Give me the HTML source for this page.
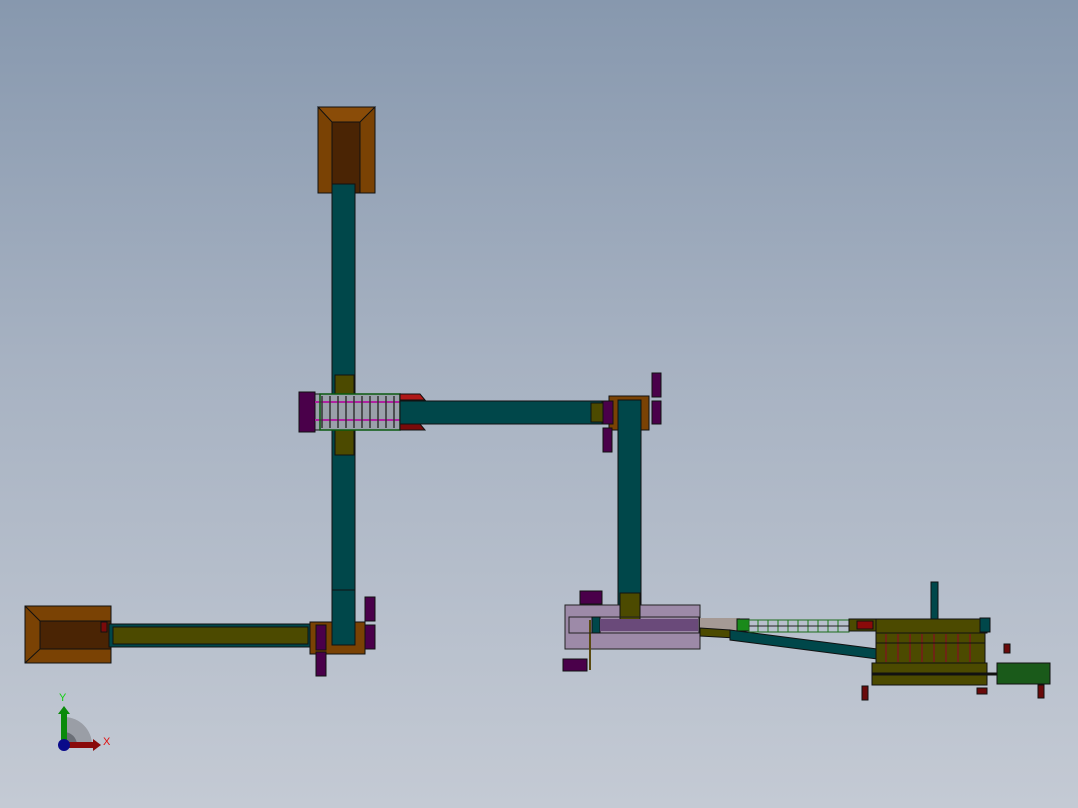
<!DOCTYPE html>
<html><head><meta charset="utf-8"><style>
html,body{margin:0;padding:0;width:1078px;height:808px;overflow:hidden}
body{background:linear-gradient(#8798ae 0%,#a7b2c2 45%,#c4cad4 100%)}
svg{position:absolute;left:0;top:0}
text{font-family:"Liberation Sans",sans-serif}
</style></head><body>
<svg width="1078" height="808" viewBox="0 0 1078 808" stroke="#111" stroke-width="1">
<!-- top hopper -->
<rect x="318" y="107" width="57" height="86" fill="#7a4204"/>
<polygon points="318,107 375,107 360,122 332,122" fill="#8a4c08"/>
<rect x="332" y="122" width="28" height="71" fill="#4a2404"/>
<!-- main vertical teal -->
<rect x="332" y="184" width="23" height="462" fill="#00474a"/>
<rect x="335" y="375" width="19" height="80" fill="#4c4a00"/>
<!-- center unit -->
<rect x="299" y="392" width="16" height="40" fill="#4a004a"/>
<rect x="315" y="394" width="85" height="36" fill="#9aa0aa"/>
<line x1="315" y1="402" x2="400" y2="402" stroke="#b020a0" stroke-width="2"/>
<line x1="315" y1="420" x2="400" y2="420" stroke="#b020a0" stroke-width="2"/>
<g stroke="#333" stroke-width="1.5">
<line x1="322" y1="396" x2="322" y2="428"/><line x1="330" y1="396" x2="330" y2="428"/><line x1="338" y1="396" x2="338" y2="428"/><line x1="346" y1="396" x2="346" y2="428"/><line x1="354" y1="396" x2="354" y2="428"/><line x1="362" y1="396" x2="362" y2="428"/><line x1="370" y1="396" x2="370" y2="428"/><line x1="378" y1="396" x2="378" y2="428"/><line x1="386" y1="396" x2="386" y2="428"/><line x1="394" y1="396" x2="394" y2="428"/>
</g>
<rect x="320" y="394" width="80" height="36" fill="none" stroke="#0a5a10" stroke-width="1.5"/>
<polygon points="400,394 420,394 425,400 400,400" fill="#b01818"/>
<polygon points="400,424 420,424 425,430 400,430" fill="#7a0a0a"/>
<!-- horizontal teal -->
<rect x="400" y="401" width="202" height="23" fill="#00474a"/>
<rect x="591" y="403" width="12" height="19" fill="#4c4a00"/>
<rect x="609" y="396" width="40" height="34" fill="#7a4204"/>
<rect x="603" y="401" width="10" height="23" fill="#4a004a"/>
<rect x="652" y="373" width="9" height="24" fill="#4a004a"/>
<rect x="652" y="401" width="9" height="23" fill="#4a004a"/>
<rect x="603" y="428" width="9" height="24" fill="#4a004a"/>
<!-- right vertical teal -->
<rect x="618" y="400" width="23" height="222" fill="#00474a"/>
<!-- bottom left hopper -->
<rect x="25" y="606" width="86" height="57" fill="#7a4204"/>
<rect x="40" y="621" width="71" height="28" fill="#4a2404"/>
<line x1="25" y1="606" x2="40" y2="621"/><line x1="25" y1="663" x2="40" y2="649"/>
<rect x="101" y="622" width="6" height="10" fill="#7a0a0a"/>
<!-- bottom conveyor -->
<rect x="109" y="624" width="205" height="23" fill="#00474a"/>
<rect x="113" y="627" width="195" height="17" fill="#4c4a00"/>
<rect x="310" y="622" width="55" height="32" fill="#7a4204"/>
<rect x="316" y="625" width="10" height="25" fill="#4a004a"/>
<rect x="365" y="597" width="10" height="24" fill="#4a004a"/>
<rect x="365" y="625" width="10" height="24" fill="#4a004a"/>
<rect x="316" y="652" width="10" height="24" fill="#4a004a"/>
<rect x="332" y="590" width="23" height="55" fill="#00474a"/>
<!-- lower right assembly -->
<rect x="565" y="605" width="135" height="44" fill="#9d8aa8" stroke="#222"/>
<rect x="580" y="591" width="22" height="13" fill="#4a004a"/>
<rect x="563" y="659" width="24" height="12" fill="#4a004a"/>
<line x1="590" y1="620" x2="590" y2="670" stroke="#5a4a10" stroke-width="2"/>
<rect x="620" y="593" width="20" height="28" fill="#4c4a00"/>
<rect x="569" y="617" width="130" height="16" fill="none" stroke="#222"/>
<rect x="592" y="617" width="8" height="16" fill="#00474a"/>
<rect x="600" y="619" width="98" height="12" fill="#6a4a7a" stroke="none"/>
<rect x="700" y="618" width="40" height="12" fill="#a59a95" stroke="none"/>
<polygon points="700,628 730,630 735,638 700,636" fill="#4c4a00"/>
<polygon points="730,630 893,651 893,661 730,640" fill="#00474a"/>
<rect x="737" y="619" width="12" height="12" fill="#1a8a1a"/>
<rect x="749" y="620" width="100" height="12" fill="none" stroke="#1a6a1a"/>
<g stroke="#1a7a1a"><line x1="758" y1="620" x2="758" y2="632"/><line x1="768" y1="620" x2="768" y2="632"/><line x1="778" y1="620" x2="778" y2="632"/><line x1="788" y1="620" x2="788" y2="632"/><line x1="798" y1="620" x2="798" y2="632"/><line x1="808" y1="620" x2="808" y2="632"/><line x1="818" y1="620" x2="818" y2="632"/><line x1="828" y1="620" x2="828" y2="632"/><line x1="838" y1="620" x2="838" y2="632"/></g>
<line x1="749" y1="626" x2="849" y2="626" stroke="#222"/>
<rect x="849" y="619" width="33" height="12" fill="#4c4a00"/>
<rect x="857" y="621" width="16" height="8" fill="#8a0a0a"/>
<rect x="931" y="582" width="7" height="38" fill="#00474a"/>
<rect x="876" y="619" width="111" height="14" fill="#4c4a00"/>
<rect x="980" y="618" width="10" height="14" fill="#00474a"/>
<rect x="876" y="633" width="109" height="30" fill="#4c4a00"/>
<g stroke="#7a1a1a" stroke-width="1.5"><line x1="886" y1="634" x2="886" y2="662"/><line x1="898" y1="634" x2="898" y2="662"/><line x1="910" y1="634" x2="910" y2="662"/><line x1="922" y1="634" x2="922" y2="662"/><line x1="934" y1="634" x2="934" y2="662"/><line x1="946" y1="634" x2="946" y2="662"/><line x1="958" y1="634" x2="958" y2="662"/><line x1="970" y1="634" x2="970" y2="662"/></g>
<line x1="876" y1="643" x2="985" y2="643" stroke="#111"/>
<rect x="872" y="663" width="115" height="22" fill="#4c4a00"/>
<line x1="872" y1="674" x2="1050" y2="674" stroke="#111" stroke-width="3"/>
<rect x="997" y="663" width="53" height="21" fill="#1a5a1a"/>
<rect x="862" y="686" width="6" height="14" fill="#6a0a0a"/>
<rect x="1038" y="685" width="6" height="13" fill="#6a0a0a"/>
<rect x="1004" y="644" width="6" height="9" fill="#6a0a0a"/>
<rect x="977" y="688" width="10" height="6" fill="#6a0a0a"/>
<!-- axis triad -->
<path d="M64,745 L64,717 A28,28 0 0 1 92,745 Z" fill="#9a9ea6" stroke="none"/>
<path d="M64,745 L64,732 A13,13 0 0 1 77,745 Z" fill="#6a6e76" stroke="none"/>
<rect x="61" y="713" width="6" height="33" fill="#0a8a0a" stroke="none"/>
<polygon points="58,714 64,706 70,714" fill="#0a8a0a" stroke="none"/>
<rect x="64" y="742" width="30" height="6" fill="#8a0a0a" stroke="none"/>
<polygon points="93,739 101,745 93,751" fill="#8a0a0a" stroke="none"/>
<circle cx="64" cy="745" r="6" fill="#0a0a8a" stroke="none"/>
<text x="59" y="701" font-size="11" fill="#10d010" stroke="none">Y</text>
<text x="103" y="745" font-size="11" fill="#e01010" stroke="none">X</text>
</svg>
</body></html>
